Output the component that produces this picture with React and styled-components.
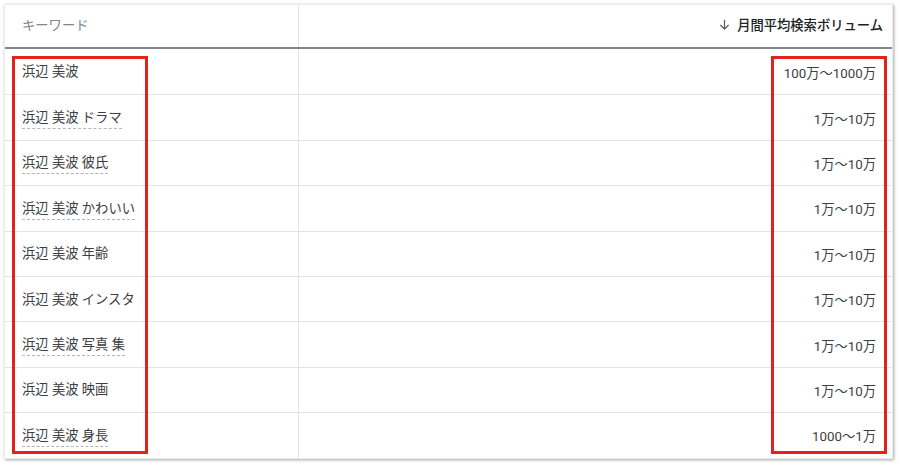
import styled, { createGlobalStyle } from "styled-components";

const GlobalStyle = createGlobalStyle`
  html, body {
    margin: 0;
    padding: 0;
    background: #fff;
  }
  body {
    font-family: Roboto, "Noto Sans CJK JP", "Liberation Sans", sans-serif;
  }
`;

const keywords = [
  { word: "浜辺 美波", volume: "100万～1000万", dashed: false },
  { word: "浜辺 美波 ドラマ", volume: "1万～10万", dashed: true },
  { word: "浜辺 美波 彼氏", volume: "1万～10万", dashed: true },
  { word: "浜辺 美波 かわいい", volume: "1万～10万", dashed: true },
  { word: "浜辺 美波 年齢", volume: "1万～10万", dashed: false },
  { word: "浜辺 美波 インスタ", volume: "1万～10万", dashed: false },
  { word: "浜辺 美波 写真 集", volume: "1万～10万", dashed: true },
  { word: "浜辺 美波 映画", volume: "1万～10万", dashed: false },
  { word: "浜辺 美波 身長", volume: "1000～1万", dashed: true },
];

export default function App() {
  return (
    <>
      <GlobalStyle />
      <Page>
        <Card>
          <HeaderRow>
            <HeadCell>キーワード</HeadCell>
            <HeadCell $align="right" $strong>
              <SortIcon viewBox="0 0 12 12">
                <path d="M6 1.5v8.5M2.2 6.4L6 10.2l3.8-3.8" />
              </SortIcon>
              月間平均検索ボリューム
            </HeadCell>
          </HeaderRow>
          <Body>
            {keywords.map((k) => (
              <Row key={k.word}>
                <Cell>
                  <Keyword $dashed={k.dashed}>{k.word}</Keyword>
                </Cell>
                <Cell $align="right">{k.volume}</Cell>
              </Row>
            ))}
            <Highlight $left />
            <Highlight />
          </Body>
        </Card>
      </Page>
    </>
  );
}

const Page = styled.div`
  padding: 4px 7px 9px 4px;
`;

const Card = styled.div`
  background: #fff;
  border: 1px solid #ececec;
  box-shadow: 1px 1px 3px rgba(0, 0, 0, 0.35);
  overflow: hidden;
`;

const HeaderRow = styled.div`
  display: grid;
  grid-template-columns: 293px 1fr;
  height: 42px;
  border-bottom: 2px solid #80868b;
`;

const HeadCell = styled.div`
  display: flex;
  align-items: center;
  justify-content: ${({ $align }) => ($align === "right" ? "flex-end" : "flex-start")};
  gap: 6px;
  padding: 0 9px 3px 17px;
  font-size: 13.3px;
  font-weight: ${({ $strong }) => ($strong ? 500 : 400)};
  color: ${({ $strong }) => ($strong ? "#202124" : "#80868b")};
  & + & {
    border-left: 1px solid #e3e3e3;
  }
`;

const SortIcon = styled.svg`
  width: 13px;
  height: 13px;
  fill: none;
  stroke: #5f6368;
  stroke-width: 1.2;
`;

const Body = styled.div`
  position: relative;
`;

const Row = styled.div`
  display: grid;
  grid-template-columns: 293px 1fr;
  height: 45.4px;
  box-sizing: border-box;
  & + & {
    border-top: 1px solid #e3e3e3;
  }
`;

const Cell = styled.div`
  display: flex;
  align-items: center;
  justify-content: ${({ $align }) => ($align === "right" ? "flex-end" : "flex-start")};
  padding: 1px 16px 0 17px;
  font-size: 13.3px;
  color: #3c4043;
  & + & {
    border-left: 1px solid #e3e3e3;
  }
`;

const Keyword = styled.span`
  padding-bottom: 2px;
  border-bottom: 1px dashed ${({ $dashed }) => ($dashed ? "#b5b5b5" : "transparent")};
`;

const Highlight = styled.div`
  position: absolute;
  top: 7px;
  bottom: 4px;
  border: 3px solid #e0241b;
  box-sizing: border-box;
  pointer-events: none;
  ${({ $left }) =>
    $left
      ? "left: 7px; width: 136px;"
      : "right: 5px; width: 116px;"}
`;
